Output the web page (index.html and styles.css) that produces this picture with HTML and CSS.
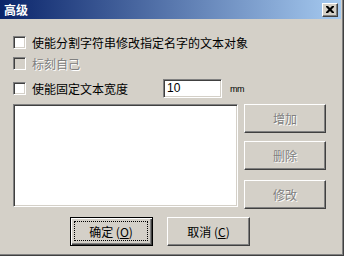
FILE: index.html
```html
<!DOCTYPE html>
<html>
<head>
<meta charset="utf-8">
<link rel="stylesheet" href="styles.css">
</head>
<body>
<div class="dialog">
  <div class="titlebar">
    <span class="title">高级</span>
    <span class="close"><svg width="8" height="7" viewBox="0 0 8 7"><path d="M0 0h2l2 2 2-2h2v1l-2.5 2.5L8 6v1H6L4 5 2 7H0V6l2.5-2.5L0 1z" fill="#000"/></svg></span>
  </div>
  <div class="body">
    <div class="row r1"><span class="cb"></span><span class="lbl">使能分割字符串修改指定名字的文本对象</span></div>
    <div class="row r2"><span class="cb disabled"></span><span class="lbl dis">标刻自己</span></div>
    <div class="row r3"><span class="cb"></span><span class="lbl wide">使能固定文本宽度</span><span class="edit">10</span><span class="unit">mm</span></div>
    <div class="main">
      <div class="listbox"></div>
      <div class="side">
        <span class="btn dis b1">增加</span>
        <span class="btn dis b2">删除</span>
        <span class="btn dis b3">修改</span>
      </div>
    </div>
    <div class="footer">
      <span class="btn default"><span class="focus">确定 (<u>O</u>)</span></span>
      <span class="btn cancel">取消 (<u>C</u>)</span>
    </div>
  </div>
</div>
</body>
</html>
```

FILE: styles.css
```css
html, body {
  margin: 0;
  padding: 0;
  background: #ffffff;
}
body {
  width: 348px;
  height: 259px;
  overflow: hidden;
  font-family: "Noto Sans CJK SC", "Liberation Sans", sans-serif;
  font-size: 12px;
  color: #000;
}
.dialog {
  width: 344px;
  height: 256px;
  box-sizing: border-box;
  background: #d4d0c8;
  border-right: 1px solid #404040;
  border-bottom: 1px solid #404040;
  box-shadow: inset -1px -1px 0 #808080;
  display: flex;
  flex-direction: column;
}
.titlebar {
  height: 19px;
  margin-right: 2px;
  background: linear-gradient(to right, #0a246a, #a6caf0);
  display: flex;
  align-items: center;
  justify-content: space-between;
}
.title {
  color: #fff;
  font-weight: bold;
  font-size: 12px;
  line-height: 19px;
  padding-left: 4px;
}
.close {
  width: 16px;
  height: 14px;
  box-sizing: border-box;
  margin-right: 3px;
  background: #d4d0c8;
  border-top: 1px solid #fff;
  border-left: 1px solid #fff;
  border-right: 1px solid #404040;
  border-bottom: 1px solid #404040;
  box-shadow: inset -1px -1px 0 #808080;
  display: flex;
  align-items: center;
  justify-content: center;
  padding-right: 1px;
  padding-bottom: 1px;
}
.close svg { display: block; }
.body {
  padding-left: 13px;
  display: flex;
  flex-direction: column;
}
.row {
  display: flex;
  align-items: center;
}
.r1 { margin-top: 17px; height: 13px; }
.r2 { margin-top: 8px; height: 13px; }
.r3 { margin-top: 9px; height: 19px; }
.cb {
  width: 13px;
  height: 13px;
  box-sizing: border-box;
  background: #fff;
  border-top: 1px solid #808080;
  border-left: 1px solid #808080;
  border-right: 1px solid #fff;
  border-bottom: 1px solid #fff;
  box-shadow: inset 1px 1px 0 #404040, inset -1px -1px 0 #d4d0c8;
  flex: none;
}
.cb.disabled { background: #d4d0c8; }
.lbl {
  margin-left: 6px;
  line-height: 13px;
  white-space: nowrap;
}
.lbl.dis {
  color: #808080;
  text-shadow: 1px 1px 0 #fff;
}
.lbl.wide { width: 131px; }
.edit {
  width: 59px;
  height: 19px;
  box-sizing: border-box;
  background: #fff;
  border-top: 1px solid #808080;
  border-left: 1px solid #808080;
  border-right: 1px solid #fff;
  border-bottom: 1px solid #fff;
  box-shadow: inset 1px 1px 0 #404040, inset -1px -1px 0 #d4d0c8;
  font-family: "Liberation Sans", sans-serif;
  font-size: 12px;
  line-height: 17px;
  padding-left: 3px;
}
.unit {
  margin-left: 8px;
  font-family: "Liberation Sans", sans-serif;
  font-size: 9px;
  letter-spacing: -0.5px;
  margin-top: 1px;
}
.main {
  margin-top: 6px;
  display: flex;
}
.listbox {
  width: 225px;
  height: 103px;
  box-sizing: border-box;
  background: #fff;
  border-top: 1px solid #808080;
  border-left: 1px solid #808080;
  border-right: 1px solid #fff;
  border-bottom: 1px solid #fff;
  box-shadow: inset 1px 1px 0 #404040, inset -1px -1px 0 #d4d0c8;
}
.side {
  margin-left: 6px;
  display: flex;
  flex-direction: column;
}
.btn {
  display: flex;
  align-items: center;
  justify-content: center;
  box-sizing: border-box;
  background: #d4d0c8;
  border-top: 1px solid #fff;
  border-left: 1px solid #fff;
  border-right: 1px solid #404040;
  border-bottom: 1px solid #404040;
  box-shadow: inset -1px -1px 0 #808080;
  white-space: nowrap;
}
.btn.dis {
  color: #808080;
  text-shadow: 1px 1px 0 #fff;
}
.side .btn { width: 82px; height: 29px; }
.b2 { margin-top: 8px; }
.b3 { margin-top: 10px; }
.footer {
  margin-top: 8px;
  margin-left: 57px;
  display: flex;
}
.footer .btn { width: 83px; height: 29px; }
.btn.default {
  border: 1px solid #000;
  box-shadow: inset 1px 1px 0 #fff, inset -1px -1px 0 #404040, inset -2px -2px 0 #808080;
  padding: 3px 4px 4px 3px;
}
.focus {
  flex: 1;
  align-self: stretch;
  border: 1px dotted #000;
  display: flex;
  align-items: center;
  justify-content: center;
}
.cancel { margin-left: 14px; }
u { text-decoration: underline; text-underline-offset: 1px; }
```
